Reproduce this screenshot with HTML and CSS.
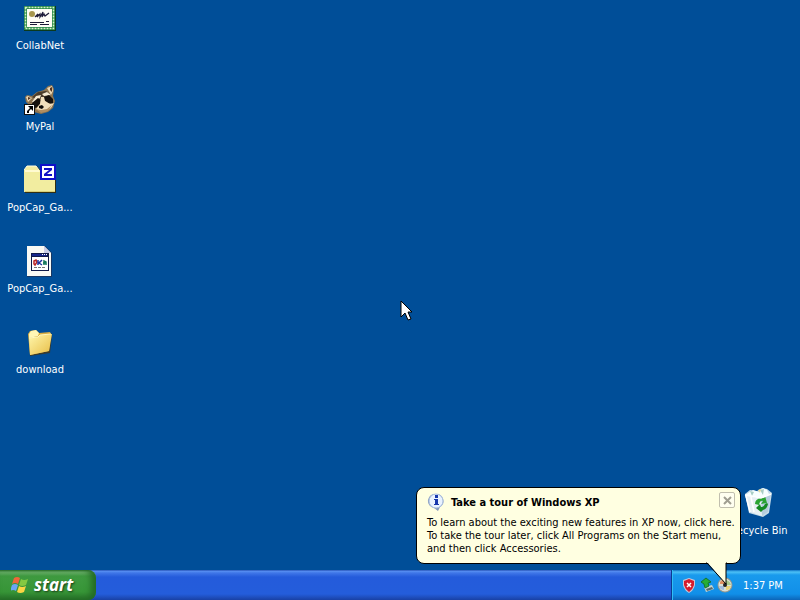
FILE: index.html
```html
<!DOCTYPE html>
<html lang="en">
<head>
<meta charset="utf-8">
<title>Desktop</title>
<link rel="stylesheet" href="styles.css">
</head>
<body>
<main class="desktop">
  <nav class="shortcuts" aria-label="Shortcuts">
    <a class="shortcut" href="#collabnet">
      <svg class="shortcut-icon" viewBox="0 0 32 32" aria-hidden="true">
        <rect x="0" y="4" width="32" height="25" fill="#0b3a1e"/>
        <rect x="0" y="4" width="31" height="24" fill="#238443"/>
        <rect x="1.500" y="5.500" width="28" height="21" fill="none" stroke="#d5f1c6" stroke-width="1.500" stroke-dasharray="2 1"/>
        <rect x="3" y="7" width="25" height="18" fill="#fffef6"/>
        <circle cx="8" cy="12" r="3" fill="#a7974d"/>
        <path d="M11 15l3-3-1 3 3-3v3l3-5-1 5 2-3 1 2 4-3" fill="none" stroke="#1d1b36" stroke-width="1.200"/>
        <path d="M6 20.500h14M22 19.500h3M6 22.500h7M16 22.500h9" fill="none" stroke="#1d1b36"/>
      </svg>
      <span class="shortcut-label">CollabNet</span>
    </a>
    <a class="shortcut" href="#mypal">
      <svg class="shortcut-icon" viewBox="0 0 32 32" aria-hidden="true">
        <path d="M1 14l2-2 5 1 5-4 7-2 4-4 4-1 2 4-1 7 2 5-2 7-5 4-7 2-7-2-4-6-4-4z" fill="#8d7450"/>
        <path d="M2 14l2-1 4 2-4 4zM23 5l5-2 1 5-2 4z" fill="#ecd7b4"/>
        <path d="M4 14l3 1-3 2zM26 5l2-1v5l-2-2z" fill="#54341f"/>
        <path d="M8 14l6-5 8-1 5 4-6 2-7 3z" fill="#4b3c2b"/>
        <path d="M8 19l4-6 5-1-1 3-6 5zM18 11l5-2 4 3-7 1z" fill="#f5ead3"/>
        <path d="M8 20l6-5 3 2-1 4-4 4-3-1zM20 14l5-2 4 4 0 5-5-1-4-3z" fill="#17120e"/>
        <path d="M17 14l3 0 1 4 5 3 4-1-3 5-4 3-6 1-5-3 4-5z" fill="#f2dfbc"/>
        <path d="M12 26l5 1 6-1 5-4-4 6-7 2z" fill="#b18e61"/>
        <path d="M15 23l3-1 2 2-2 2-3-1z" fill="#0e0b09"/>
        <rect x="0" y="21" width="11" height="11" fill="#111"/>
        <rect x="1" y="22" width="9" height="9" fill="#fff"/>
        <path d="M4 23h5v5l-2-2-2 2v2H3v-2l3-3z" fill="#000"/>
      </svg>
      <span class="shortcut-label">MyPal</span>
    </a>
    <a class="shortcut" href="#popcap-archive">
      <svg class="shortcut-icon" viewBox="0 0 32 32" aria-hidden="true">
        <path d="M1 6l3-4h9l3 4h16v23H1z" fill="#322f12"/>
        <path d="M0 6l3-4h9l3 4h16v22H0z" fill="#f2eda0"/>
        <path d="M1 6h14l1 2H1z" fill="#fffbd1"/>
        <path d="M1 27h30v1H1z" fill="#d8cf78"/>
        <path d="M0 6l3-4h9l3 4" fill="none" stroke="#fffde1"/>
        <rect x="16" y="0" width="16" height="16" fill="#1010c8"/>
        <rect x="18" y="2" width="12" height="12" fill="#fff"/>
        <path d="M20 4h8v2l-5 4h5v2h-8v-2l5-4h-5z" fill="#1111c5"/>
      </svg>
      <span class="shortcut-label">PopCap_Ga...</span>
    </a>
    <a class="shortcut" href="#popcap-page">
      <svg class="shortcut-icon" viewBox="0 0 32 32" aria-hidden="true">
        <path d="M3 1h18l7 7v24H3z" fill="#173764"/>
        <path d="M3 1h17l7 7v23H3z" fill="#f9f9f4"/>
        <path d="M20 1v7h7z" fill="#c9cde7"/>
        <path d="M7 8h18v18H7z" fill="#101a48"/>
        <path d="M8 12h16v13H8z" fill="#fff"/>
        <path d="M8 9h15v2H8z" fill="#17268c"/>
        <path d="M18 9h1v1h-1zM20 9h1v1h-1zM22 9h1v1h-1z" fill="#fff"/>
        <path d="M10 16l2-1 1 2-2 3-1-1z" fill="none" stroke="#bc2525" stroke-width="1.500"/>
        <path d="M14 15v5M18 15l-3 3 3 2" fill="none" stroke="#22349e" stroke-width="1.500"/>
        <path d="M20 20v-4l2 1v3M19 18h3" fill="none" stroke="#15785b" stroke-width="1.500"/>
        <path d="M10 22.500h12" stroke="#777" stroke-dasharray="3 1"/>
      </svg>
      <span class="shortcut-label">PopCap_Ga...</span>
    </a>
    <a class="shortcut" href="#download">
      <svg class="shortcut-icon" viewBox="0 0 32 32" aria-hidden="true">
        <defs><linearGradient id="folder" x2="1" y2="1"><stop stop-color="#fff7ad"/><stop offset="1" stop-color="#e8bd45"/></linearGradient></defs>
        <path d="M5 9l2-3 6-1 3 3 11-1 1 2-2 18-20 3z" fill="#3a3c2d"/>
        <path d="M4 8l2-3 6-1 3 3 11-1 1 2-2 17-19 4z" fill="#d9ad42"/>
        <path d="M5 8l2-3 5-1 3 3-1 3-9 2z" fill="#fff6b5"/>
        <path d="M5 12l9-1 2-2 12-1-3 17-19 4z" fill="url(#folder)"/>
        <path d="M5 12l9-1 2-2 11-1" fill="none" stroke="#fff8bc"/>
      </svg>
      <span class="shortcut-label">download</span>
    </a>
  </nav>
  <a class="shortcut recycle" href="#recycle-bin">
    <svg class="shortcut-icon" viewBox="0 0 32 32" aria-hidden="true">
      <path d="M2 7l5-4 7 1 5-3 5 1 5 4-3 20-6 4-14-4z" fill="#c4dbe8"/>
      <path d="M2 8l8-5 6 2 4-4 4 2 2 4-6 4-16-2z" fill="#f7ffff"/>
      <path d="M7 4l4 1-2 4zM17 3l4-1-1 6z" fill="#a9cdc5"/>
      <path d="M15 3l3-1-1 4z" fill="#eedb91"/>
      <path d="M2 8l16 4 10-5-3 18-6 4-12-4z" fill="#e7f0f4"/>
      <path d="M18 12l10-5-3 18-6 4z" fill="#b5cddd"/>
      <path d="M3 9l4 16M8 10l3 15" stroke="#fff" stroke-width="1.500"/>
      <path d="M12 17q0-5 6-6h2l2-2 2 7-6 1 2-3q-3-1-4 4z" fill="#2aa432"/>
      <path d="M24 16l1 1q-1 5-5 6l-2 2-5-4 4-4 1 3q3 0 4-3z" fill="#148a22"/>
      <path d="M2 8l16 3 10-4" fill="none" stroke="#fff" stroke-width="1.500"/>
    </svg>
    <span class="shortcut-label">Recycle Bin</span>
  </a>
  <svg class="pointer" viewBox="0 0 13 21" aria-hidden="true">
    <path d="M1 1v16l4-4 3 7 3-1-3-7h4z" fill="#fff" stroke="#000"/>
  </svg>
  <section class="balloon" aria-labelledby="balloon-title">
    <header class="balloon-head">
      <svg class="balloon-icon" viewBox="0 0 16 18" aria-hidden="true">
        <path d="M8 1a7 7 0 0 1 4 13l-2 4-4-3A7 7 0 0 1 8 1z" fill="#8297bb"/>
        <circle cx="8" cy="8" r="7" fill="#e9f2ff" stroke="#a9bedf"/>
        <path d="M7 2h3v3H7zM6 6h4v5h1v1H6v-1h1V7H6z" fill="#1838ac"/>
      </svg>
      <h1 class="balloon-title" id="balloon-title">Take a tour of Windows XP</h1>
      <button class="balloon-close" type="button" aria-label="Close">
        <svg class="close-icon" viewBox="0 0 9 9" aria-hidden="true"><path d="M1 1l7 7M8 1L1 8" stroke="#a09e91" stroke-width="2"/></svg>
      </button>
    </header>
    <p class="balloon-text">To learn about the exciting new features in XP now, click here.<br>To take the tour later, click All Programs on the Start menu,<br>and then click Accessories.</p>
    <svg class="balloon-tail" viewBox="0 0 22 24" aria-hidden="true">
      <path d="M1 0l19 22V0z" fill="#ffffe1"/>
      <path d="M0 1h1l19 21V1h1" fill="none" stroke="#000"/>
    </svg>
  </section>
</main>
<footer class="taskbar">
  <button class="start" type="button">
    <svg class="start-flag" viewBox="0 0 18 18" aria-hidden="true">
      <path d="M3 2q3-2 6 0L7 8Q4 6 1 8z" fill="#f0663a"/>
      <path d="M10 3q3 2 7 0l-2 6q-4 2-7 0z" fill="#84c942"/>
      <path d="M1 9q3-2 6 0l-2 6q-3-2-6 0z" fill="#6aa5f4"/>
      <path d="M8 10q3 2 7 0l-2 6q-4 2-7 0z" fill="#fbd544"/>
    </svg>
    <span>start</span>
  </button>
  <div class="tray">
    <svg class="tray-icon" viewBox="0 0 16 16" aria-hidden="true">
      <path d="M8 1l6 2v5q-1 5-6 8-5-3-6-8V3z" fill="#c7c6d7"/>
      <path d="M8 2l5 2v4q-1 4-5 7-4-3-5-7V4z" fill="#d51c2e"/>
      <path d="M6 6l4 4M10 6l-4 4" stroke="#fff" stroke-width="1.500"/>
    </svg>
    <svg class="tray-icon" viewBox="0 0 16 16" aria-hidden="true">
      <path d="M5 10l8-2 2 4-8 3z" fill="#c7d4cf"/>
      <path d="M7 12l6-2 1 2-6 2z" fill="#586c70"/>
      <path d="M2 5l5-4 5 4-3 1 1 3-4 2-1-4z" fill="#27ad35" stroke="#157333"/>
    </svg>
    <svg class="tray-icon" viewBox="0 0 16 16" aria-hidden="true">
      <circle cx="8" cy="8" r="7.500" fill="#8f9691"/>
      <circle cx="8" cy="8" r="6.500" fill="#dadfd5"/>
      <path d="M3 5q2-3 5-2v4H3z" fill="#df9164"/>
      <path d="M9 3q4 1 5 5H9z" fill="#a8c98b"/>
      <path d="M2 9h5v4q-4 0-5-4z" fill="#a3bddc"/>
      <path d="M9 9h5q-1 4-5 4z" fill="#ecd477"/>
      <circle cx="8" cy="8" r="2" fill="#222"/>
    </svg>
    <time class="clock" datetime="13:37">1:37 PM</time>
  </div>
</footer>
</body>
</html>
```
FILE: styles.css
```css
* { box-sizing: border-box; }

body {
  margin: 0;
  min-height: 100vh;
  display: flex;
  flex-direction: column;
  background: #004e98;
  font-family: "DejaVu Sans Condensed", "DejaVu Sans", sans-serif;
  font-size: 11px;
  line-height: 13px;
}

button {
  font: inherit;
  border: 0;
  padding: 0;
}

svg { display: block; }

.desktop {
  position: relative;
  flex: 1;
  display: flex;
  justify-content: space-between;
  padding: 2px 3px 0 2px;
}

.shortcuts {
  display: flex;
  flex-direction: column;
}

.shortcut {
  display: flex;
  flex-direction: column;
  align-items: center;
  gap: 5px;
  width: 76px;
  height: 81px;
  color: #fff;
  text-decoration: none;
}

.shortcut-icon {
  width: 32px;
  height: 32px;
}

.shortcut-label { white-space: nowrap; }

.recycle {
  align-self: flex-end;
  margin-bottom: 2px;
}

.pointer {
  position: absolute;
  left: 50%;
  top: 300px;
  width: 13px;
  height: 21px;
}

.balloon {
  position: absolute;
  right: 59px;
  bottom: 6px;
  width: 325px;
  padding: 4px 4px 8px 10px;
  border: 1px solid #000;
  border-radius: 8px;
  background: #ffffe1;
  color: #000;
}

.balloon-head {
  display: flex;
  align-items: center;
  height: 20px;
}

.balloon-icon {
  width: 18px;
  height: 18px;
}

.balloon-title {
  flex: 1;
  margin: 0 0 0 6px;
  font-size: 11px;
  font-weight: bold;
}

.balloon-close {
  display: grid;
  place-items: center;
  align-self: flex-start;
  width: 16px;
  height: 16px;
  margin-right: 1px;
  border: 1px solid #c1bfae;
  border-radius: 2px;
  background: #fffff0;
}

.close-icon {
  width: 9px;
  height: 9px;
}

.balloon-text {
  margin: 4px 0 0;
  white-space: nowrap;
}

.balloon-tail {
  position: absolute;
  right: 12px;
  top: 100%;
  width: 22px;
  height: 24px;
  margin-top: -1px;
  z-index: 1;
}

.taskbar {
  display: flex;
  justify-content: space-between;
  height: 30px;
  background: linear-gradient(#1941a5 0, #5a91f2 1px, #3f76e8 3px, #245bdb 7px, #245ddb 24px, #1941a5 30px);
}

.start {
  display: flex;
  align-items: center;
  gap: 5px;
  width: 96px;
  padding-left: 11px;
  border-radius: 0 8px 8px 0;
  background: linear-gradient(#2c6e2d 0, #73b873 2px, #3f9a40 6px, #379537 22px, #256f28 30px);
  box-shadow: inset -5px 0 6px #246b25;
  color: #fff;
  font-family: "Open Sans", sans-serif;
  font-size: 17px;
  font-style: italic;
  font-weight: bold;
  line-height: 20px;
  text-shadow: 1px 1px 2px #173f18;
}

.start-flag {
  width: 18px;
  height: 18px;
}

.tray {
  display: flex;
  align-items: center;
  gap: 2px;
  width: 129px;
  padding-left: 9px;
  border-left: 1px solid #0c3b91;
  background: linear-gradient(#0f72c7 0, #4dc1f6 2px, #199aed 5px, #118fe8 24px, #0c65b8 30px);
  box-shadow: inset 1px 0 #30bff5;
  color: #fff;
}

.tray-icon {
  width: 16px;
  height: 16px;
}

.clock { margin-left: 8px; }
```
